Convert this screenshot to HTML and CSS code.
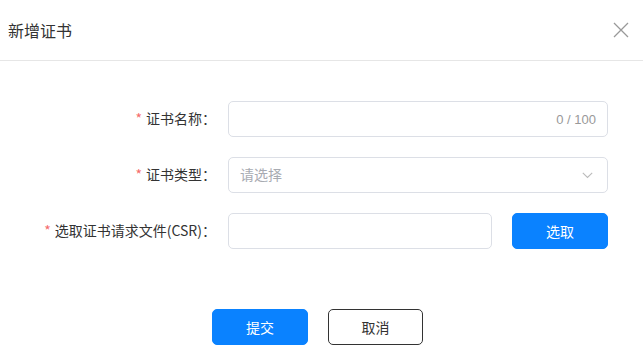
FILE: index.html
```html
<!DOCTYPE html>
<html lang="zh-CN">
<head>
<meta charset="utf-8">
<title>新增证书</title>
<link rel="stylesheet" href="styles.css">
</head>
<body>
<div class="dialog">
  <div class="header">
    <span class="title">新增证书</span>
    <span class="close" aria-label="关闭">
      <svg width="16" height="16" viewBox="0 0 16 16"><path d="M1 1 L15 15 M15 1 L1 15" stroke="#999" stroke-width="1.3" fill="none"/></svg>
    </span>
  </div>
  <div class="form">
    <div class="row">
      <label class="label"><span class="req">*</span>证书名称：</label>
      <div class="field input">
        <span class="grow"></span>
        <span class="count">0 / 100</span>
      </div>
    </div>
    <div class="row">
      <label class="label"><span class="req">*</span>证书类型：</label>
      <div class="field input">
        <span class="grow placeholder">请选择</span>
        <svg class="chev" width="11" height="7" viewBox="0 0 11 7"><path d="M0.8 0.8 L5.5 5.5 L10.2 0.8" stroke="#bbb" stroke-width="1.1" fill="none"/></svg>
      </div>
    </div>
    <div class="row">
      <label class="label"><span class="req">*</span>选取证书请求文件(CSR)：</label>
      <div class="field split">
        <div class="input file"></div>
        <button class="btn primary">选取</button>
      </div>
    </div>
  </div>
  <div class="footer">
    <button class="btn primary">提交</button>
    <button class="btn outline">取消</button>
  </div>
</div>
</body>
</html>
```

FILE: styles.css
```css
* { box-sizing: border-box; }
body {
  margin: 0;
  background: #fff;
  font-family: "Noto Sans CJK SC", "Noto Sans", sans-serif;
  color: #333;
}
.dialog { width: 643px; }
.header {
  height: 61px;
  display: flex;
  align-items: center;
  justify-content: space-between;
  padding: 0 14px 0 8px;
  border-bottom: 1px solid #e6e6e6;
}
.title { font-size: 16px; color: #333; line-height: 1; }
.close { display: flex; width: 16px; height: 16px; margin-top: -1px; }
.form {
  padding-top: 40px;
  display: flex;
  flex-direction: column;
  gap: 20px;
}
.row {
  display: grid;
  grid-template-columns: 216px 380px;
  column-gap: 12px;
  align-items: center;
  height: 36px;
}
.label {
  text-align: right;
  font-size: 14px;
  line-height: 1;
  color: #333;
  white-space: nowrap;
  margin-top: -3px;
}
.req { color: #f56c6c; margin-right: 4px; }
.input {
  height: 36px;
  border: 1px solid #dcdfe6;
  border-radius: 5px;
  display: flex;
  align-items: center;
  padding: 0 11px 0 11px;
  background: #fff;
}
.grow { flex: 1; }
.placeholder { color: #a8abb2; font-size: 14px; line-height: 1; margin-top: -2px; }
.count { color: #999; font-size: 13px; line-height: 1; font-family: "Liberation Sans", "Noto Sans", sans-serif; }
.chev { margin-right: 3px; }
.split { display: flex; gap: 20px; }
.file { width: 264px; }
.btn {
  width: 96px;
  height: 36px;
  border-radius: 5px;
  font-family: "Noto Sans CJK SC", sans-serif;
  font-size: 14px;
  line-height: 1;
  cursor: pointer;
  padding: 0;
}
.primary { background: #0a82ff; border: 1px solid #0a82ff; color: #fff; }
.outline { background: #fff; border: 1px solid #333; color: #333; width: 95px; }
.footer {
  margin-top: 60px;
  display: flex;
  gap: 20px;
  padding-left: 212px;
}
```
